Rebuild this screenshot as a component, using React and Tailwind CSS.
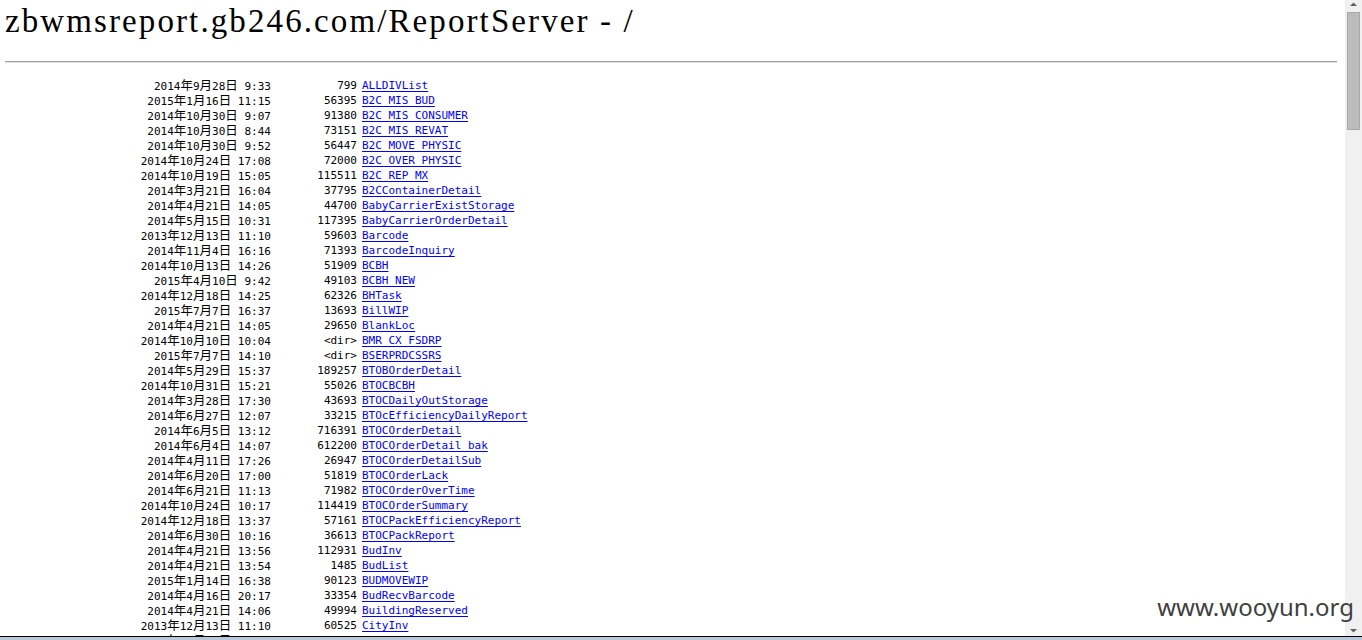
import React from "react";

const rows = [
  ["2014", "9", "28", "9:33", "799", "ALLDIVList"],
  ["2015", "1", "16", "11:15", "56395", "B2C_MIS_BUD"],
  ["2014", "10", "30", "9:07", "91380", "B2C_MIS_CONSUMER"],
  ["2014", "10", "30", "8:44", "73151", "B2C_MIS_REVAT"],
  ["2014", "10", "30", "9:52", "56447", "B2C_MOVE_PHYSIC"],
  ["2014", "10", "24", "17:08", "72000", "B2C_OVER_PHYSIC"],
  ["2014", "10", "19", "15:05", "115511", "B2C_REP_MX"],
  ["2014", "3", "21", "16:04", "37795", "B2CContainerDetail"],
  ["2014", "4", "21", "14:05", "44700", "BabyCarrierExistStorage"],
  ["2014", "5", "15", "10:31", "117395", "BabyCarrierOrderDetail"],
  ["2013", "12", "13", "11:10", "59603", "Barcode"],
  ["2014", "11", "4", "16:16", "71393", "BarcodeInquiry"],
  ["2014", "10", "13", "14:26", "51909", "BCBH"],
  ["2015", "4", "10", "9:42", "49103", "BCBH_NEW"],
  ["2014", "12", "18", "14:25", "62326", "BHTask"],
  ["2015", "7", "7", "16:37", "13693", "BillWIP"],
  ["2014", "4", "21", "14:05", "29650", "BlankLoc"],
  ["2014", "10", "10", "10:04", "<dir>", "BMR_CX_FSDRP"],
  ["2015", "7", "7", "14:10", "<dir>", "BSERPRDCSSRS"],
  ["2014", "5", "29", "15:37", "189257", "BTOBOrderDetail"],
  ["2014", "10", "31", "15:21", "55026", "BTOCBCBH"],
  ["2014", "3", "28", "17:30", "43693", "BTOCDailyOutStorage"],
  ["2014", "6", "27", "12:07", "33215", "BTOcEfficiencyDailyReport"],
  ["2014", "6", "5", "13:12", "716391", "BTOCOrderDetail"],
  ["2014", "6", "4", "14:07", "612200", "BTOCOrderDetail_bak"],
  ["2014", "4", "11", "17:26", "26947", "BTOCOrderDetailSub"],
  ["2014", "6", "20", "17:00", "51819", "BTOCOrderLack"],
  ["2014", "6", "21", "11:13", "71982", "BTOCOrderOverTime"],
  ["2014", "10", "24", "10:17", "114419", "BTOCOrderSummary"],
  ["2014", "12", "18", "13:37", "57161", "BTOCPackEfficiencyReport"],
  ["2014", "6", "30", "10:16", "36613", "BTOCPackReport"],
  ["2014", "4", "21", "13:56", "112931", "BudInv"],
  ["2014", "4", "21", "13:54", "1485", "BudList"],
  ["2015", "1", "14", "16:38", "90123", "BUDMOVEWIP"],
  ["2014", "4", "16", "20:17", "33354", "BudRecvBarcode"],
  ["2014", "4", "21", "14:06", "49994", "BuildingReserved"],
  ["2013", "12", "13", "11:10", "60525", "CityInv"],
  ["2014", "11", "11", "10:36", "<dir>", "CommonReportUnitsF"],
];

function Cjk({ children }) {
  return <span className="text-[12.5px]">{children}</span>;
}

function Row({ r }) {
  const [y, m, d, t, size, name] = r;
  return (
    <div className="flex h-[15px] items-center whitespace-pre leading-[15px]">
      <span className="w-[271px] shrink-0 text-right">
        {y}
        <Cjk>年</Cjk>
        {m}
        <Cjk>月</Cjk>
        {d}
        <Cjk>日</Cjk>
        {" " + t}
      </span>
      <span className="w-[86px] shrink-0 text-right">{size}</span>
      <a href="#" className="ml-[5px] text-[#0000ff] underline underline-offset-[2px]">
        {name}
      </a>
    </div>
  );
}

export default function App() {
  return (
    <div className="relative h-[640px] w-[1362px] overflow-hidden bg-white">
      <div className="flex h-[636px]">
        <div className="min-w-0 flex-1 overflow-hidden pl-[5px] pr-[8px]">
          <h1 className="pt-[3px] font-['Liberation_Serif',serif] text-[33px] leading-[36px] tracking-[2.1px] text-black">
            zbwmsreport.gb246.com/ReportServer - /
          </h1>
          <div className="mt-[22px] border-t border-t-[#a0a0a0] border-b border-b-[#e3e3e3]" />
          <div className="-ml-[5px] mt-[15px] font-['DejaVu_Sans_Mono','Noto_Sans_CJK_SC',monospace] text-[11px] text-black">
            {rows.map((r, i) => (
              <Row key={i} r={r} />
            ))}
          </div>
        </div>
        <div className="flex w-[17px] shrink-0 flex-col items-center bg-[#f0f0f0]">
          <svg width="17" height="12" viewBox="0 0 17 12" className="shrink-0">
            <path d="M5 6 L8.5 2.5 L12 6 Z" fill="#606060" />
          </svg>
          <div className="h-[118px] w-[13px] border border-[#a8a8a8] bg-[#bcbcbc]" />
          <div className="flex-1" />
          <svg width="17" height="12" viewBox="0 0 17 12" className="shrink-0">
            <path d="M5 5 L12 5 L8.5 8.5 Z" fill="#606060" />
          </svg>
        </div>
      </div>
      <div className="h-[4px] border-t border-black bg-[#b9c8d8]" />
      <div className="pointer-events-none absolute bottom-[21px] right-[8px] font-['Noto_Sans',sans-serif] text-[24px] leading-none text-[#404040]">
        www.wooyun.org
      </div>
    </div>
  );
}
